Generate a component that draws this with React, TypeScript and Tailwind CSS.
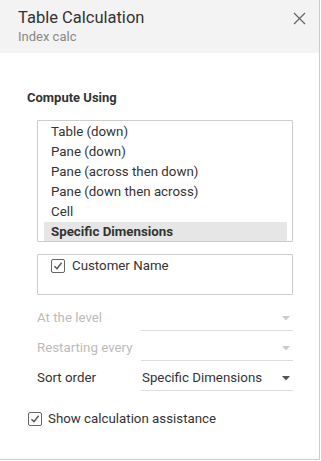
import React from "react";

const Check = () => (
  <svg width="10" height="10" viewBox="0 0 10 10" fill="none">
    <path d="M1.5 5.2 L4 7.8 L8.6 1.8" stroke="#555" strokeWidth="1.4" />
  </svg>
);

const Arrow = ({ color }: { color: string }) => (
  <svg width="8" height="5" viewBox="0 0 8 5">
    <path d="M0 0 L8 0 L4 4.5 Z" fill={color} />
  </svg>
);

function Row({ label, value, disabled }: { label: string; value?: string; disabled?: boolean }) {
  return (
    <div className="flex h-[30px] items-stretch">
      <div
        className={
          "w-[104px] text-[13.3px] leading-[20px] pt-[7px] " +
          (disabled ? "text-[#bbbbbb]" : "text-[#333333]")
        }
      >
        {label}
      </div>
      <div className="flex-1 border-b border-[#dddddd] flex items-start justify-between pt-[7px] pr-[3px]">
        <span className="text-[13.3px] leading-[20px] pl-[1px] text-[#333333]">{value ?? ""}</span>
        <div className="h-[20px] flex items-center">
          <Arrow color={disabled ? "#cccccc" : "#555555"} />
        </div>
      </div>
    </div>
  );
}

export default function App() {
  const items = [
    "Table (down)",
    "Pane (down)",
    "Pane (across then down)",
    "Pane (down then across)",
    "Cell",
  ];
  return (
    <div
      className="w-[320px] h-[460px] border-r border-b border-[#cccccc] bg-white flex flex-col text-[#333333]"
      style={{ fontFamily: "Roboto, 'Liberation Sans', sans-serif" }}
    >
      <div className="h-[53px] bg-[#f3f3f3] flex justify-between pl-[18px] pr-[13px]">
        <div className="flex flex-col pt-[7px]">
          <div className="text-[16.5px] leading-[22px] text-[#333333]">Table Calculation</div>
          <div className="text-[13px] leading-[16px] text-[#888888]">Index calc</div>
        </div>
        <div className="pt-[12px]">
          <svg width="13" height="13" viewBox="0 0 13 13">
            <path d="M1 1 L12 12 M12 1 L1 12" stroke="#666" strokeWidth="1.3" />
          </svg>
        </div>
      </div>
      <div className="pl-[27px] pt-[36px] text-[13px] font-bold leading-[18px] text-[#333333]">
        Compute Using
      </div>
      <div className="ml-[37px] mt-[13px] w-[256px] h-[122px] border border-[#cccccc] rounded-[1px] pl-[6px] pr-[5px] pt-[1px]">
        {items.map((t) => (
          <div key={t} className="h-[20px] leading-[20px] pl-[7px] text-[13.3px]">
            {t}
          </div>
        ))}
        <div className="h-[19px] leading-[19px] pl-[7px] text-[13.3px] font-bold bg-[#e6e6e6]">
          Specific Dimensions
        </div>
      </div>
      <div className="ml-[37px] mt-[12px] w-[256px] h-[41px] border border-[#cccccc] rounded-[1px] pl-[13px] pt-[3px]">
        <div className="flex items-center gap-[7px] h-[16px]">
          <div className="w-[14px] h-[14px] border border-[#666] rounded-[2px] flex items-center justify-center">
            <Check />
          </div>
          <span className="text-[13.3px] leading-[16px]">Customer Name</span>
        </div>
      </div>
      <div className="ml-[37px] mt-[6px] w-[256px] flex flex-col">
        <Row label="At the level" disabled />
        <Row label="Restarting every" disabled />
        <Row label="Sort order" value="Specific Dimensions" />
      </div>
      <div className="ml-[28px] mt-[20px] flex items-center gap-[6px] h-[16px]">
        <div className="w-[14px] h-[14px] border border-[#666] rounded-[2px] flex items-center justify-center">
          <Check />
        </div>
        <span className="text-[13.3px] leading-[16px]">Show calculation assistance</span>
      </div>
    </div>
  );
}
